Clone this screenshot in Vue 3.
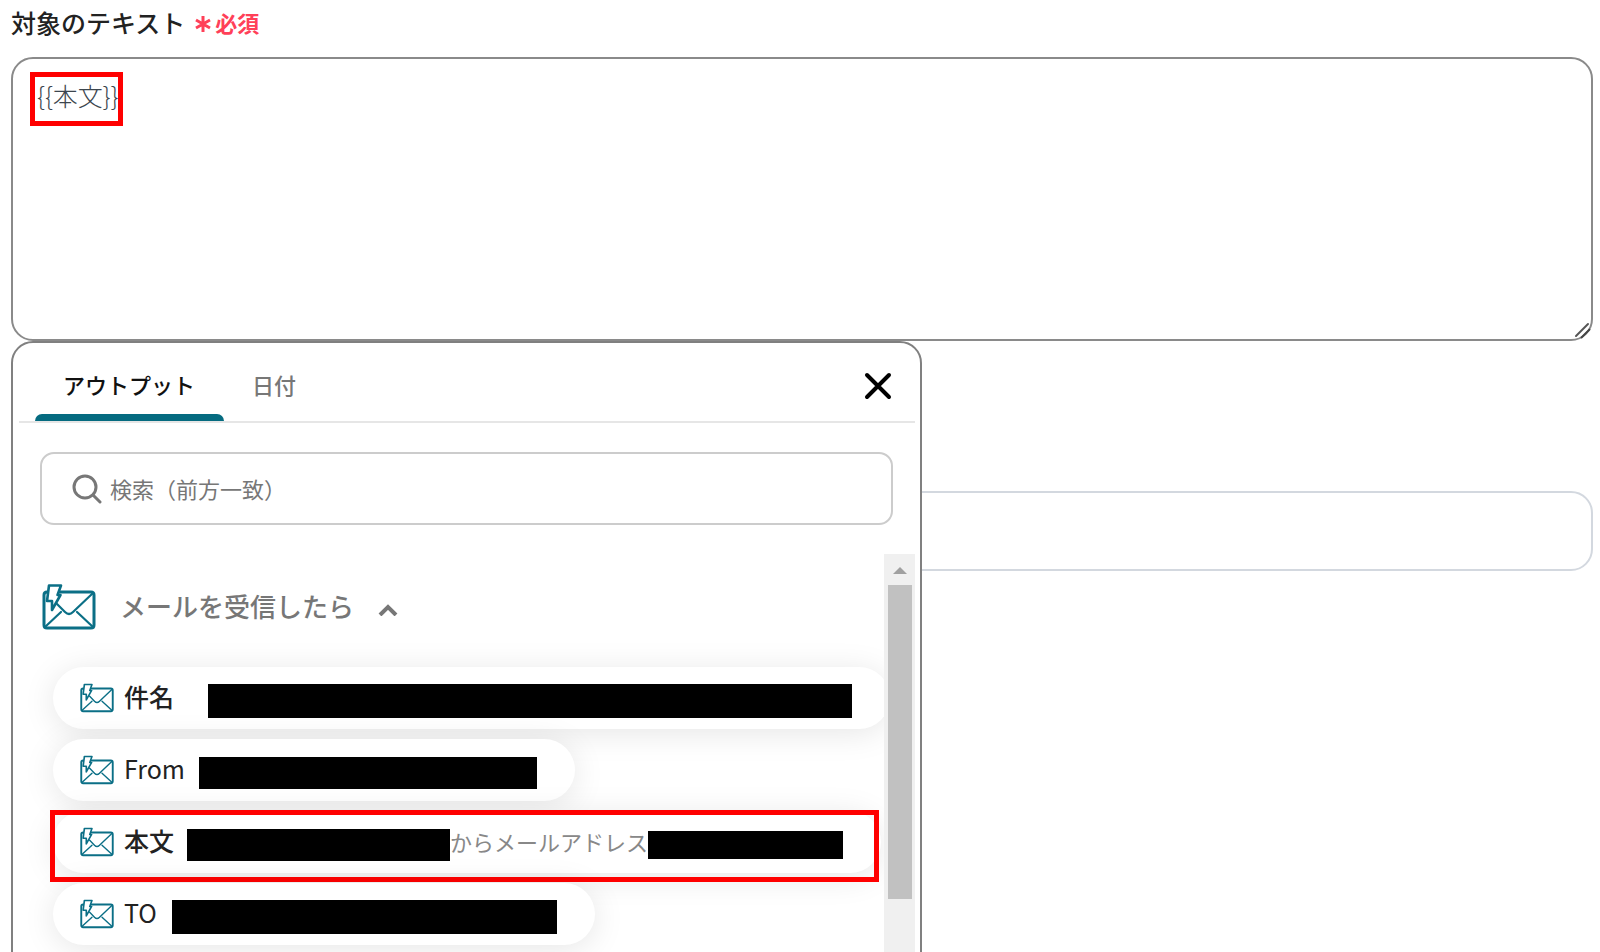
<script setup>
import { ref, computed } from 'vue';

const text = ref('{{本文}}');
const query = ref('');
const note = ref('');
const tab = ref('output');
const isOpen = ref(true);
const isExpanded = ref(true);

const tabs = [
  { id: 'output', name: 'アウトプット' },
  { id: 'date', name: '日付' },
];

// parts with a width are masked values
const outputs = [
  { id: 1, name: '件名', bold: true, offset: 34, parts: [{ width: 644, height: 34 }] },
  { id: 2, name: 'From', offset: 14, parts: [{ width: 338, height: 32 }] },
  {
    id: 3, name: '本文', bold: true, marked: true, offset: 13,
    parts: [{ width: 263, height: 32 }, { text: 'からメールアドレス' }, { width: 195, height: 28 }],
  },
  { id: 4, name: 'TO', offset: 15, parts: [{ width: 385, height: 34 }] },
];

const filteredOutputs = computed(() => {
  return outputs.filter(item => item.name.startsWith(query.value));
});

function insertOutput(item) {
  text.value += '{{' + item.name + '}}';
}
</script>

<template>
  <main class="page">
    <svg class="symbols" aria-hidden="true">
      <symbol id="mail" viewBox="0 0 54 46">
        <g fill="none" stroke="#0b6f86" stroke-linejoin="round" stroke-linecap="round">
          <path stroke-width="3" d="M18 8H49Q52 8 52 11V41Q52 44 49 44H5Q2 44 2 41V11Q2 8 5 8" />
          <path stroke-width="2.2" d="M51 9L31 28Q27 32 23 28L15 20M3 43L19 28M51 43L35 28" />
          <path stroke-width="2.6" fill="#fff" d="M7 1.500H19L15.500 11H18.500L10 26L10 17H5Z" />
        </g>
      </symbol>
    </svg>

    <label class="label" for="target">
      対象のテキスト
      <span class="required"><svg viewBox="0 0 16 18" width="16" height="18"><path d="M8 1V17M1 5L15 13M15 5L1 13" stroke="currentColor" stroke-width="3" /></svg>必須</span>
    </label>

    <div class="field">
      <textarea id="target" v-model="text" spellcheck="false"></textarea>
      <span class="text-mark"></span>
      <svg class="grip" viewBox="0 0 18 18" width="18" height="18">
        <path d="M2 14L14 2" fill="none" stroke="#555" stroke-width="2" stroke-linecap="round" />
        <path d="M7 16L16 7" fill="none" stroke="#444" stroke-width="2" />
      </svg>

      <section v-if="isOpen" class="panel">
        <div class="tabs">
          <button
            v-for="item in tabs"
            :key="item.id"
            type="button"
            class="tab"
            :class="{ active: tab === item.id }"
            @click="tab = item.id"
          >{{ item.name }}</button>
          <button type="button" class="close" aria-label="閉じる" @click="isOpen = false">
            <svg viewBox="0 0 28 28" width="28" height="28"><path d="M3 3L25 25M25 3L3 25" stroke="#000" stroke-width="4" stroke-linecap="round" /></svg>
          </button>
        </div>

        <div class="search">
          <svg viewBox="0 0 30 30" width="30" height="30">
            <circle cx="13" cy="13" r="11" fill="none" stroke="#777" stroke-width="3" />
            <path d="M21 21L28 28" stroke="#777" stroke-width="3" stroke-linecap="round" />
          </svg>
          <input v-model="query" type="text" placeholder="検索（前方一致）" aria-label="検索">
        </div>

        <div class="body">
          <div class="list">
            <button type="button" class="group" @click="isExpanded = !isExpanded">
              <svg class="group-icon"><use href="#mail" /></svg>
              <span>メールを受信したら</span>
              <svg class="chevron" viewBox="0 0 20 12" width="20" height="12"><path d="M2 11L10 3L18 11" fill="none" stroke="#777" stroke-width="4" /></svg>
            </button>

            <ul v-if="isExpanded" class="outputs">
              <li v-for="item in filteredOutputs" :key="item.id" :class="{ marked: item.marked }">
                <button type="button" class="pill" @click="insertOutput(item)">
                  <svg class="pill-icon"><use href="#mail" /></svg>
                  <span class="name" :class="{ bold: item.bold }">{{ item.name }}</span>
                  <span class="value" :style="{ marginLeft: item.offset + 'px' }">
                    <template v-for="(part, i) in item.parts" :key="i">
                      <span v-if="part.text">{{ part.text }}</span>
                      <span v-else class="mask" :style="{ width: part.width + 'px', height: part.height + 'px' }"></span>
                    </template>
                  </span>
                </button>
              </li>
            </ul>
          </div>
          <div class="scrollbar">
            <span class="arrow"></span>
            <span class="thumb"></span>
          </div>
        </div>
      </section>
    </div>

    <input v-model="note" class="note" type="text" aria-label="入力">
  </main>
</template>

<style>
  body {
    background: #fff;
  }
</style>

<style scoped>
  * {
    box-sizing: border-box;
  }
  .page {
    height: 100vh;
    overflow: hidden;
    padding: 3px 7px 0 11px;
    font-family: "Noto Sans CJK JP", sans-serif;
    color: #222;
  }
  button, input, textarea {
    font-family: inherit;
  }
  button {
    border: none;
    background: none;
    padding: 0;
    cursor: pointer;
    white-space: nowrap;
  }
  svg {
    flex: none;
  }
  .symbols {
    position: absolute;
    width: 0;
    height: 0;
  }
  .label {
    display: flex;
    align-items: center;
    gap: 6px;
    height: 38px;
    margin-bottom: 16px;
    font-size: 25px;
    font-weight: 500;
  }
  .required {
    display: flex;
    align-items: center;
    gap: 4px;
    margin-left: 4px;
    font-size: 22px;
    font-weight: 700;
    color: #ff4058;
  }
  .required svg {
    margin-top: 4px;
  }
  .field {
    position: relative;
  }
  textarea {
    display: block;
    width: 100%;
    height: 284px;
    padding: 18px 24px;
    border: 2px solid #8a8a8a;
    border-radius: 22px;
    outline: none;
    resize: none;
    background: #fff;
    font-size: 25px;
    line-height: 36px;
    font-weight: 300;
    color: #3c464e;
  }
  .text-mark {
    position: absolute;
    top: 15px;
    left: 19px;
    width: 93px;
    height: 54px;
    border: 5px solid #f00;
    pointer-events: none;
  }
  .grip {
    position: absolute;
    right: 1px;
    bottom: 1px;
  }
  .panel {
    position: absolute;
    top: 100%;
    left: 0;
    z-index: 1;
    width: 911px;
    max-width: 100%;
    padding: 0 5px 0 6px;
    border: 2px solid #808080;
    border-radius: 22px;
    background: #fff;
  }
  .tabs {
    display: flex;
    align-items: stretch;
    height: 80px;
    padding: 0 16px;
    border-bottom: 2px solid #e6e6e6;
  }
  .tab {
    padding: 10px 29px 0 28px;
    border-bottom: 7px solid transparent;
    font-size: 22px;
    font-weight: 500;
    color: #777;
  }
  .tab.active {
    position: relative;
    color: #111;
  }
  .tab.active::after {
    content: "";
    position: absolute;
    left: 0;
    right: 0;
    bottom: -7px;
    height: 7px;
    border-radius: 7px 7px 0 0;
    background: #056b80;
  }
  .close {
    margin-left: auto;
    padding: 12px 7px 0;
  }
  .search {
    display: flex;
    align-items: center;
    gap: 8px;
    height: 73px;
    margin: 29px 22px 29px 21px;
    padding: 0 30px;
    border: 2px solid #ccc;
    border-radius: 14px;
  }
  .search input {
    flex: 1;
    min-width: 0;
    padding: 0 0 2px;
    border: none;
    outline: none;
    font-size: 22px;
    line-height: 30px;
  }
  .search input::placeholder {
    color: #777;
  }
  .body {
    display: flex;
  }
  .list {
    flex: 1;
    min-width: 0;
    overflow: hidden;
    padding: 28px 0 48px 23px;
  }
  .group {
    display: flex;
    align-items: center;
    font-size: 26px;
    font-weight: 500;
    color: #777;
    gap: 24px;
    height: 50px;
  }
  .group-icon {
    width: 54px;
    height: 46px;
  }
  .group span {
    margin-top: -4px;
  }
  .chevron {
    margin-top: 6px;
  }
  .outputs {
    display: flex;
    flex-direction: column;
    align-items: flex-start;
    gap: 10px;
    margin: 35px 0 0;
    padding: 0 0 0 11px;
    list-style: none;
  }
  .outputs li {
    position: relative;
  }
  .pill {
    display: flex;
    align-items: center;
    height: 62px;
    padding: 0 38px 0 27px;
    border-radius: 31px;
    background: #fff;
    box-shadow: 0 4px 32px rgba(0, 0, 0, 0.1);
  }
  .pill-icon {
    width: 34px;
    height: 30px;
  }
  .name {
    margin: -4px 0 0 10px;
    font-size: 25px;
    font-weight: 400;
    color: #222;
  }
  .name.bold {
    font-weight: 500;
  }
  .value {
    display: flex;
    align-items: center;
    margin-top: -2px;
    font-size: 22px;
    font-weight: 400;
    color: #888;
  }
  .mask {
    flex: none;
    margin-top: 8px;
    background: #000;
  }
  .marked::after {
    content: "";
    position: absolute;
    top: -1px;
    right: 2px;
    bottom: -9px;
    left: -3px;
    border: 5px solid #f00;
    pointer-events: none;
  }
  .scrollbar {
    display: flex;
    flex-direction: column;
    align-items: center;
    width: 31px;
    background: #f0f0f0;
  }
  .arrow {
    margin: 13px 0 11px;
    border: 7px solid transparent;
    border-top: none;
    border-bottom-color: #a0a0a0;
  }
  .thumb {
    width: 24px;
    height: 314px;
    background: #c1c1c1;
  }
  .note {
    display: block;
    width: 100%;
    height: 80px;
    margin-top: 150px;
    padding: 0 24px;
    border: 2px solid #d3d8df;
    border-radius: 22px;
    outline: none;
    font-size: 25px;
  }
</style>
